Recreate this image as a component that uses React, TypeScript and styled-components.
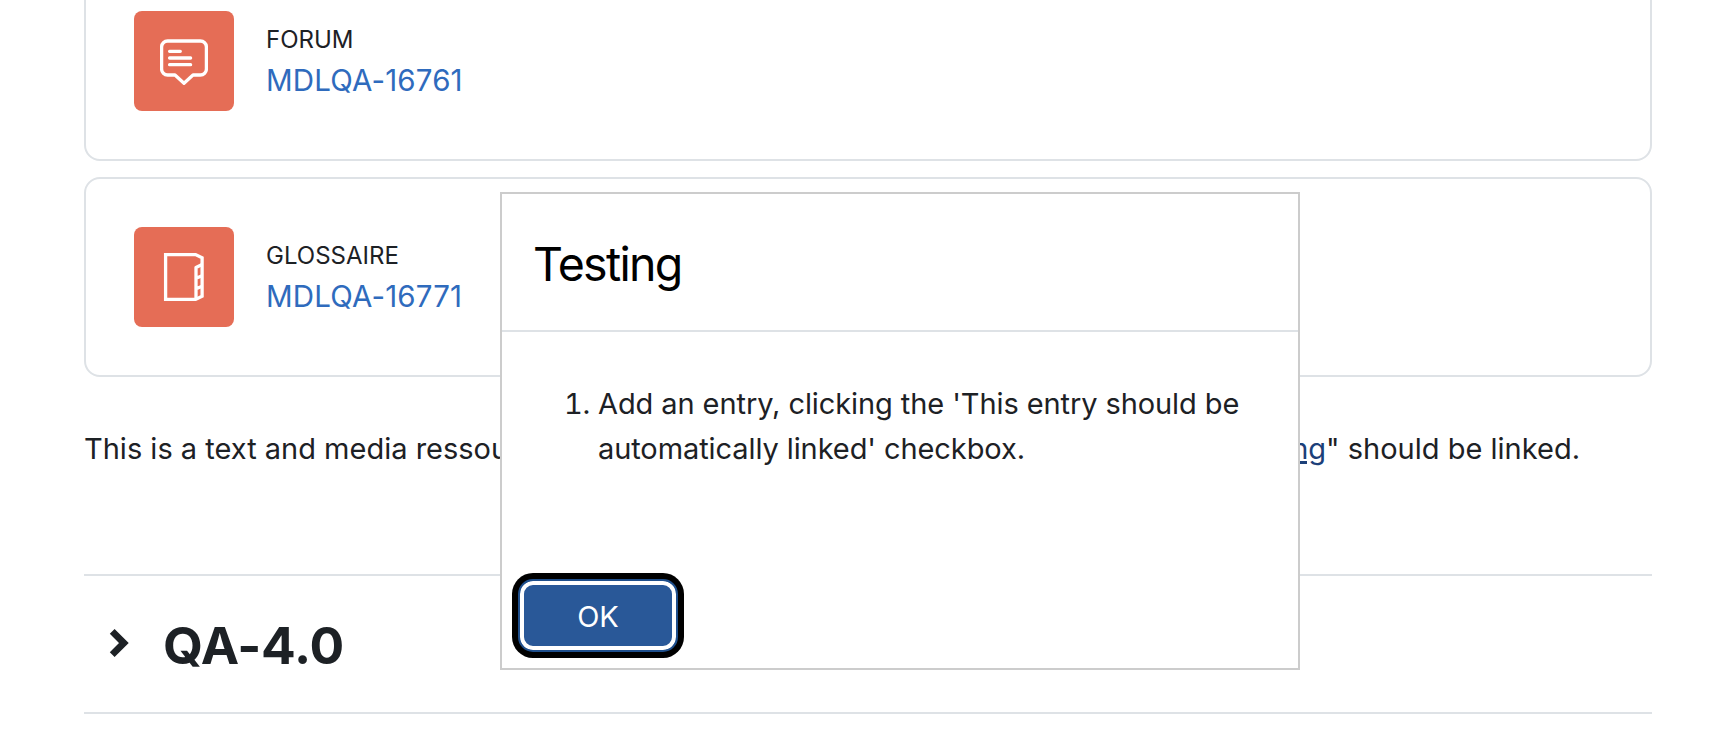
import styled, { createGlobalStyle } from "styled-components";

const GlobalStyle = createGlobalStyle`
  * {
    box-sizing: border-box;
  }

  body {
    margin: 0;
    background-color: #fff;
    color: #1d2125;
    font-family: "Inter", "Liberation Sans", sans-serif;
    font-size: 29px;
    line-height: 45px;
  }
`;

const Page = styled.div`
  position: relative;
  height: 744px;
  padding: 0 70px 0 84px;
  overflow: hidden;
`;

const ActivityList = styled.ul`
  display: flex;
  flex-direction: column;
  gap: 16px;
  margin: -39px 0 0;
  padding: 0;
  list-style: none;
`;

const ActivityCard = styled.li`
  display: flex;
  align-items: center;
  gap: 32px;
  height: 200px;
  padding: 0 48px;
  border: 2px solid #dee2e6;
  border-radius: 16px;
`;

const IconTile = styled.span`
  display: flex;
  justify-content: center;
  align-items: center;
  width: 100px;
  height: 100px;
  border-radius: 8px;
  background-color: #e56d56;
`;

const ActivityText = styled.div`
  display: flex;
  flex-direction: column;
  padding-top: 3px;
`;

const ActivityType = styled.span`
  font-size: 24px;
  line-height: 36px;
  text-transform: uppercase;
`;

const ActivityLink = styled.a`
  color: #2f6bbd;
  font-size: 29.5px;
  letter-spacing: 0.15px;
`;

const Paragraph = styled.p`
  display: flex;
  justify-content: space-between;
  width: 1496px;
  margin: 49px 0 103px;
  white-space: nowrap;
`;

const GlossaryLink = styled.a`
  color: #1c4079;
  text-decoration: underline;
  text-decoration-thickness: 3px;
  text-underline-offset: 2px;
`;

const Section = styled.section`
  display: flex;
  align-items: center;
  gap: 33px;
  height: 140px;
  padding-left: 24px;
  border-top: 2px solid #dee2e6;
  border-bottom: 2px solid #dee2e6;
`;

const SectionTitle = styled.h3`
  margin: 0;
  padding-top: 2px;
  font-size: 51.5px;
  font-weight: 700;
  line-height: 62px;
  letter-spacing: -0.2px;
`;

const Dialog = styled.div`
  position: absolute;
  top: 192px;
  left: 500px;
  display: flex;
  flex-direction: column;
  width: 800px;
  height: 478px;
  border: 2px solid #ccc;
  background-color: #fff;
`;

const DialogHeader = styled.div`
  display: flex;
  align-items: center;
  height: 138px;
  padding: 3px 31px 0;
  border-bottom: 2px solid #dee2e6;
`;

const DialogTitle = styled.h5`
  margin: 0;
  color: #000;
  font-size: 46.5px;
  font-weight: 400;
  line-height: 58px;
  letter-spacing: -1.7px;
`;

const DialogBody = styled.div`
  flex: 1;
  padding: 49px 32px 0;
`;

const Steps = styled.ol`
  margin: 0;
  padding-left: 64px;
  letter-spacing: -0.09px;
  white-space: nowrap;
`;

const DialogFooter = styled.div`
  display: flex;
  padding: 0 16px 16px;
`;

const OkButton = styled.button`
  width: 160px;
  height: 73px;
  padding: 2px 0 0;
  border: 2px solid #1f4f8c;
  border-radius: 15px;
  outline: none;
  background-color: #295898;
  box-shadow: inset 0 0 0 4px #fff, 0 0 0 6px #000;
  color: #fff;
  font: inherit;
`;

const ForumIcon = () => (
  <svg
    width="48"
    height="48"
    viewBox="0 0 48 48"
    fill="none"
    stroke="#fff"
    strokeWidth="3.3"
    strokeLinecap="round"
    strokeLinejoin="round"
  >
    <path d="M7.6 4h32.8a6 6 0 0 1 6 6v22a6 6 0 0 1-6 6H33L24 46.2 15 38H7.6a6 6 0 0 1-6-6V10a6 6 0 0 1 6-6z" />
    <path d="M9.6 14.3h10.7M9.6 21h21M9.6 27.7h21" />
  </svg>
);

const GlossaryIcon = () => (
  <svg
    width="48"
    height="48"
    viewBox="0 0 48 48"
    fill="none"
    stroke="#fff"
    strokeWidth="3.3"
    strokeLinejoin="round"
  >
    <path
      d="M5.6 1.6H35.5L42.1 4.8V43.2L35.5 46.4H5.6z"
      strokeLinejoin="miter"
    />
    <path d="M42.1 11.5L36 14.5V46M36 25.3l6.2-2.6M36 35.8l6.2-2.6" />
  </svg>
);

const ChevronIcon = () => (
  <svg
    width="22"
    height="32"
    viewBox="0 0 22 32"
    fill="none"
    stroke="#1d2125"
    strokeWidth="6.8"
  >
    <path d="M4.2 3.3L15.9 15L4.2 26.7" />
  </svg>
);

const activities = [
  { type: "Forum", name: "MDLQA-16761", Icon: ForumIcon },
  { type: "Glossaire", name: "MDLQA-16771", Icon: GlossaryIcon },
];

const App = () => {
  return (
    <>
      <GlobalStyle />
      <Page>
        <ActivityList>
          {activities.map(({ type, name, Icon }) => (
            <ActivityCard key={name}>
              <IconTile>
                <Icon />
              </IconTile>
              <ActivityText>
                <ActivityType>{type}</ActivityType>
                <ActivityLink>{name}</ActivityLink>
              </ActivityText>
            </ActivityCard>
          ))}
        </ActivityList>
        <Paragraph>
          <span>This is a text and media ressource.</span>
          <span>
            The word "<GlossaryLink>Testing</GlossaryLink>" should be linked.
          </span>
        </Paragraph>
        <Section>
          <ChevronIcon />
          <SectionTitle>QA-4.0</SectionTitle>
        </Section>
        <Dialog role="dialog">
          <DialogHeader>
            <DialogTitle>Testing</DialogTitle>
          </DialogHeader>
          <DialogBody>
            <Steps>
              <li>
                Add an entry, clicking the 'This entry should be
                <br />
                automatically linked' checkbox.
              </li>
            </Steps>
          </DialogBody>
          <DialogFooter>
            <OkButton>OK</OkButton>
          </DialogFooter>
        </Dialog>
      </Page>
    </>
  );
};

export default App;
